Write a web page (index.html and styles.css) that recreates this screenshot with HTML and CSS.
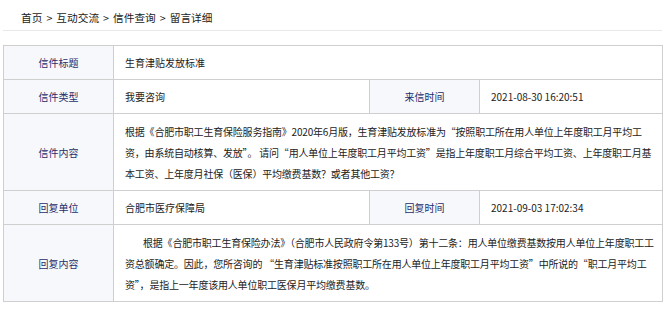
FILE: index.html
```html
<!DOCTYPE html>
<html lang="zh-CN">
<head>
  <meta charset="UTF-8" />
  <meta name="viewport" content="width=device-width, initial-scale=1.0"/>
  <title>留言详细</title>
  <link rel="stylesheet" href="styles.css">
</head>
<body>
  <div class="page">
    <div class="crumbs">首页<span class="sep">&gt;</span>互动交流<span class="sep">&gt;</span>信件查询<span class="sep">&gt;</span>留言详细</div>

    <table class="detail">
      <colgroup>
        <col class="c-label">
        <col class="c-value">
        <col class="c-label">
        <col class="c-time">
      </colgroup>
      <tr>
        <th>信件标题</th>
        <td colspan="3">生育津贴发放标准</td>
      </tr>
      <tr>
        <th>信件类型</th>
        <td>我要咨询</td>
        <th>来信时间</th>
        <td>2021-08-30 16:20:51</td>
      </tr>
      <tr class="tall">
        <th>信件内容</th>
        <td colspan="3" class="text">根据《合肥市职工生育保险服务指南》2020年6月版，生育津贴发放标准为“按照职工所在用人单位上年度职工月平均工<br>资，由系统自动核算、发放”。 请问“用人单位上年度职工月平均工资”是指上年度职工月综合平均工资、上年度职工月基<br>本工资、上年度月社保（医保）平均缴费基数？或者其他工资？</td>
      </tr>
      <tr>
        <th>回复单位</th>
        <td>合肥市医疗保障局</td>
        <th>回复时间</th>
        <td>2021-09-03 17:02:34</td>
      </tr>
      <tr class="tall">
        <th>回复内容</th>
        <td colspan="3" class="text"><p class="reply">根据《合肥市职工生育保险办法》（合肥市人民政府令第133号）第十二条：用人单位缴费基数按用人单位上年度职工工<br>资总额确定。因此，您所咨询的 “生育津贴标准按照职工所在用人单位上年度职工月平均工资”中所说的“职工月平均工<br>资”，是指上一年度该用人单位职工医保月平均缴费基数。</p></td>
      </tr>
    </table>
  </div>
</body>
</html>
```

FILE: styles.css
```css
body {
  margin: 0;
  font-family: "Noto Sans CJK SC", "Liberation Sans", sans-serif;
  font-size: 10px;
  color: #222;
  background: #fff;
}
.page {
  padding: 0 4px 0 3px;
}
.crumbs {
  height: 30px;
  line-height: 35px;
  padding-left: 18px;
  font-size: 10.7px;
  color: #1a1a1a;
  border-bottom: 1px solid #e8e8e8;
}
.sep {
  margin: 0 4px;
}
.detail {
  width: 659px;
  margin-top: 14px;
  border-collapse: collapse;
  table-layout: fixed;
}
.c-label { width: 110px; }
.c-value { width: 256px; }
.c-time { width: 183px; }
.detail th,
.detail td {
  border: 1px solid #cfcfcf;
  height: 33px;
  padding: 0 6px 0 11px;
  vertical-align: middle;
}
.detail th {
  padding: 0;
  background: #f7f8fc;
  color: #1f2d6b;
  font-weight: normal;
  text-align: center;
}
.detail td {
  line-height: 21px;
  white-space: nowrap;
}
.detail td.text {
  letter-spacing: -0.2px;
  overflow: hidden;
}
.detail tr.tall td,
.detail tr.tall th {
  height: 75px;
}
.detail tr.tall td {
  padding-top: 1px;
}
.reply {
  margin: 0;
  text-indent: 18px;
}
```
